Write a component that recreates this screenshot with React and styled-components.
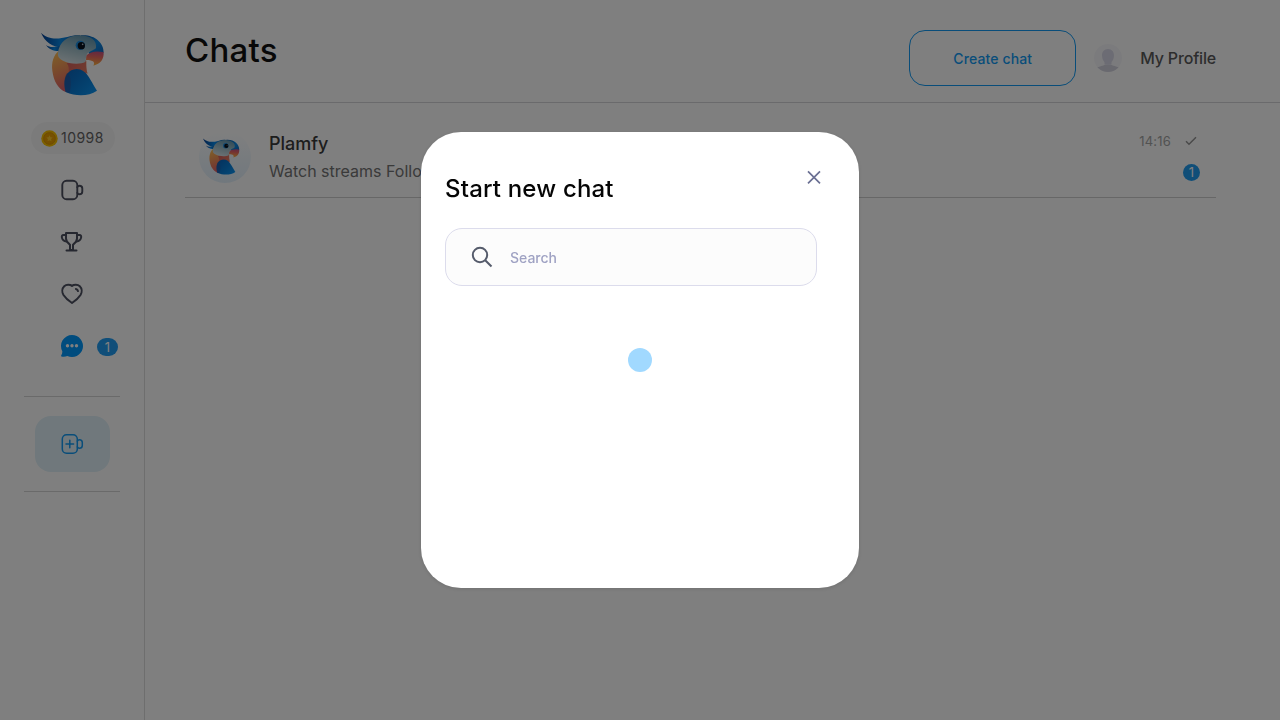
import React, { useId } from 'react';
import styled, { createGlobalStyle } from 'styled-components';

const GlobalStyle = createGlobalStyle`
  * { box-sizing: border-box; }
  body { margin: 0; background: #fff; font-family: Inter, "Liberation Sans", sans-serif; overflow: hidden; }
  button { font-family: inherit; background: none; padding: 0; border: 0; }
  svg { display: block; flex: none; }
`;

const Page = styled.div`
  display: flex;
  height: 100vh;
`;

const Sidebar = styled.aside`
  width: 145px;
  flex: none;
  border-right: 1px solid #dcdcdc;
  display: flex;
  flex-direction: column;
  align-items: center;
  padding-top: 32px;
`;

const Logo = styled.div`
  margin-left: 2px;
`;

const Coins = styled.div`
  display: flex;
  align-items: center;
  gap: 3px;
  width: 84px;
  height: 32px;
  margin: 26px 0 10px 2px;
  padding: 0 0 0 10px;
  border-radius: 16px;
  background: #f7f7f7;
  color: #646464;
  font-size: 14px;
  line-height: 18px;
  letter-spacing: 0.45px;
`;

const Nav = styled.nav`
  display: flex;
  flex-direction: column;
  width: 100%;
`;

const NavItem = styled.a`
  display: flex;
  align-items: center;
  height: 52px;
  padding-left: 60px;
  gap: 13px;
  color: #4d5060;
`;

const NavBadge = styled.span`
  width: 21px;
  height: 18px;
  margin-top: 2px;
  border-radius: 9px;
  background: #209df3;
  color: #fff;
  font-size: 13px;
  line-height: 19px;
  text-align: center;
`;

const StreamBox = styled.div`
  width: 96px;
  height: 96px;
  margin-top: 24px;
  border-top: 1px solid #d4d4d4;
  border-bottom: 1px solid #d4d4d4;
  display: flex;
  align-items: center;
  justify-content: center;
`;

const StreamButton = styled.button`
  width: 75px;
  height: 56px;
  margin-left: 1px;
  padding-right: 1px;
  border-radius: 16px;
  background: #e0f1f8;
  color: #129bf4;
  display: flex;
  align-items: center;
  justify-content: center;
`;

const Main = styled.main`
  flex: 1;
  min-width: 0;
`;

const Header = styled.header`
  height: 103px;
  padding: 30px 64px 0 40px;
  border-bottom: 1px solid #d5d5d8;
  display: flex;
  align-items: flex-start;
`;

const Title = styled.h1`
  margin: 0 auto 0 0;
  font-size: 33px;
  line-height: 41px;
  font-weight: 480;
  letter-spacing: 0.25px;
  color: #111;
`;

const CreateButton = styled.button`
  width: 167px;
  height: 56px;
  border: 1px solid #129bf4;
  border-radius: 16px;
  color: #129bf4;
  font-size: 14px;
  font-weight: 500;
  line-height: 18px;
  padding-top: 1px;
  letter-spacing: 0.12px;
`;

const Profile = styled.div`
  display: flex;
  align-items: center;
  height: 56px;
  margin-left: 18px;
  gap: 18px;
  font-size: 16px;
  font-weight: 500;
  letter-spacing: -0.18px;
  color: #5a5a5a;
`;

const ChatRow = styled.section`
  display: flex;
  height: 95px;
  margin: 0 64px 0 40px;
  padding: 28px 16px 0 14px;
  border-bottom: 1px solid #cecece;
`;

const Avatar = styled.div`
  width: 52px;
  height: 52px;
  border-radius: 50%;
  background: linear-gradient(#fff, #e2f0fb);
  display: flex;
  justify-content: center;
  padding: 7px 7px 0 0;
`;

const ChatText = styled.div`
  margin-left: 18px;
  flex: 1;
  font-size: 16px;
  line-height: 24px;
  color: #747474;
`;

const ChatName = styled.div`
  font-size: 18px;
  font-weight: 500;
  line-height: 26px;
  margin-bottom: 2px;
  color: #3a3a3a;
`;

const ChatMeta = styled.div`
  display: flex;
  flex-direction: column;
  align-items: flex-end;
  padding-top: 1px;
  font-size: 13px;
  color: #a4a4a4;
`;

const TimeLine = styled.div`
  display: flex;
  align-items: center;
  height: 18px;
  gap: 14px;
  margin-right: 3px;
  letter-spacing: 0.2px;
`;

const Unread = styled.span`
  width: 17px;
  height: 17px;
  margin-top: 14px;
  border-radius: 50%;
  background: #219df1;
  color: #fff;
  font-size: 13px;
  line-height: 17px;
  text-align: center;
`;

const Overlay = styled.div`
  position: fixed;
  inset: 0;
  background: rgba(0, 0, 0, 0.5);
  display: flex;
  align-items: center;
  justify-content: center;
`;

const Dialog = styled.div`
  width: 438px;
  height: 456px;
  padding: 36px 38px 0 24px;
  border-radius: 40px;
  background: #fff;
  box-shadow: 0 1px 4px rgba(0, 0, 0, 0.12);
`;

const DialogHead = styled.div`
  display: flex;
  justify-content: space-between;
  height: 60px;
`;

const DialogTitle = styled.h2`
  margin: 0;
  font-size: 24px;
  line-height: 42px;
  font-weight: 480;
  letter-spacing: 0.18px;
  color: #050505;
`;

const Close = styled.button`
  width: 14px;
  height: 14px;
  margin-top: 2px;
  color: #6b7093;
`;

const SearchField = styled.label`
  display: flex;
  align-items: center;
  gap: 16px;
  width: 372px;
  height: 58px;
  padding-left: 24px;
  border: 1px solid #dcdcec;
  border-radius: 17px;
  background: #fcfcfc;
  color: #555b6b;
`;

const SearchInput = styled.input`
  width: 260px;
  height: 24px;
  padding: 0;
  border: 0;
  outline: 0;
  background: transparent;
  font: 450 14px Inter, sans-serif;
  &::placeholder { color: #9fa2c3; opacity: 1; }
`;

const Loader = styled.div`
  width: 24px;
  height: 24px;
  margin: 62px 0 0 183px;
  border-radius: 50%;
  background: #a1d9ff;
`;

function Parrot({ size }) {
  const id = useId();
  const ref = (name) => `${id}${name}`;
  const fill = (name) => `url(#${id}${name})`;
  return (
    <svg width={size} height={size} viewBox="15 12 192 192">
      <defs>
        <linearGradient id={ref('crest')} x1="0" y1="0" x2="1" y2="0">
          <stop stopColor="#063f91" /><stop offset=".5" stopColor="#0789e8" /><stop offset="1" stopColor="#0654a5" />
        </linearGradient>
        <linearGradient id={ref('body')} x1=".2" y1="0" x2=".6" y2="1">
          <stop stopColor="#ffc052" /><stop offset=".4" stopColor="#f39458" /><stop offset="1" stopColor="#dd5270" />
        </linearGradient>
        <linearGradient id={ref('chest')} x1="0" y1=".3" x2="1" y2=".6">
          <stop stopColor="#d9605c" /><stop offset="1" stopColor="#e27a62" />
        </linearGradient>
        <linearGradient id={ref('head')} x1=".7" y1="0" x2=".35" y2="1">
          <stop stopColor="#5f96b1" /><stop offset=".5" stopColor="#a0bfc9" /><stop offset="1" stopColor="#d8e4e8" />
        </linearGradient>
        <linearGradient id={ref('cap')} x1="0" y1="0" x2="1" y2="1">
          <stop stopColor="#0753a6" /><stop offset=".55" stopColor="#0c8ae5" /><stop offset="1" stopColor="#1265b8" />
        </linearGradient>
        <linearGradient id={ref('beak')} x1=".6" y1="0" x2=".5" y2="1">
          <stop stopColor="#c85282" /><stop offset=".4" stopColor="#ec6b60" /><stop offset="1" stopColor="#ffb640" />
        </linearGradient>
        <linearGradient id={ref('wing')} x1="0" y1="0" x2="1" y2=".8">
          <stop stopColor="#0b60b8" /><stop offset=".55" stopColor="#087bd5" /><stop offset="1" stopColor="#0b92ef" />
        </linearGradient>
      </defs>
      <path d="M15 14C36 35 64 34 94 27C108 22 121 21 134 22L82 59C50 58 25 40 15 14Z" fill={fill('crest')} />
      <path d="M30 51C43 60 58 58 80 51L70 69C54 70 39 64 30 51Z" fill={fill('crest')} />
      <path d="M70 67C52 81 46 104 49 128C53 160 67 183 89 192L151 145V98Z" fill={fill('body')} />
      <path d="M92 106C110 101 133 101 150 98C149 112 151 125 155 137C139 127 113 122 97 138C100 126 99 113 92 106Z" fill={fill('chest')} />
      <path d="M134 22C174 18 204 43 203 74L159 79L154 51Z" fill={fill('cap')} />
      <path d="M151 82C163 71 182 68 203 73C204 94 194 108 172 113C178 103 173 96 150 96Z" fill={fill('beak')} />
      <path d="M66 75C69 42 96 22 130 22C163 22 184 37 180 60C173 68 160 68 153 79C148 87 151 94 148 102C132 110 98 108 81 98C70 92 64 86 66 75Z" fill={fill('head')} />
      <path d="M89 192C79 157 90 124 122 123C153 124 161 154 183 188C158 205 121 206 89 192Z" fill={fill('wing')} />
      <path d="M94 134C107 146 106 170 101 195L89 192C83 167 84 148 94 134Z" fill="#2f569f" opacity=".6" />
      <circle cx="133" cy="52" r="14" fill="#1d8ee0" />
      <circle cx="136" cy="53" r="11" fill="#06111c" />
      <circle cx="140" cy="49" r="2.500" fill="#b9cbd8" />
    </svg>
  );
}

function CoinIcon() {
  return (
    <svg width="17" height="17" viewBox="0 0 17 17">
      <circle cx="8.500" cy="8.500" r="8.200" fill="#f8c000" />
      <circle cx="8.500" cy="8.500" r="5.800" fill="#eda000" stroke="#dc9400" />
      <path d="m8.500 5.200 1 2 2.200.3-1.600 1.600.4 2.200-2-1-2 1 .4-2.200-1.600-1.600 2.200-.3z" fill="#ffc928" />
    </svg>
  );
}

function CameraIcon({ plus }) {
  return (
    <svg width="24" height="24" viewBox="0 0 24 24" fill="none" stroke="currentColor" strokeWidth={plus ? 1.5 : 1.9} strokeLinecap="round" strokeLinejoin="round">
      <rect x="2.300" y="2.800" width="15" height="18.400" rx="4.300" />
      <path d="M17.300 9.200c.6-1.200 1.100-1.400 2.100-1.400 1.800 0 2.900 1.200 2.900 2.800v2.800c0 1.600-1.100 2.800-2.900 2.800-1 0-1.500-.2-2.100-1.400" />
      {plus && <path d="M9.800 8.200v7.600M6 12h7.600" />}
    </svg>
  );
}

function TrophyIcon() {
  return (
    <svg width="24" height="24" viewBox="0 0 24 24" fill="none" stroke="currentColor" strokeWidth="2" strokeLinecap="round" strokeLinejoin="round">
      <path d="M6 3h11v5.500c0 3.300-2.100 4.700-4 6.200V20h-3v-5.300C8.100 13.200 6 11.800 6 8.500V3Z" />
      <path d="M6 5H3.600C2 5 1.600 6.300 1.900 7.600 2.400 10 4.400 11.200 6.600 11.600M17 5h2.400c1.600 0 2 1.300 1.700 2.600-.5 2.400-2.500 3.600-4.700 4M6.500 20.500h10" />
    </svg>
  );
}

function HeartIcon() {
  return (
    <svg width="24" height="24" viewBox="0 0 24 24" fill="none" stroke="currentColor" strokeWidth="2" strokeLinecap="round" strokeLinejoin="round">
      <path d="M12 3.900C14 2.300 17.700 2.300 19.800 4.200c2.300 2.200 2.400 6 .7 8.800-2 3.100-4.800 5.600-8.500 8-3.700-2.400-6.500-4.900-8.500-8-1.700-2.800-1.600-6.600.7-8.800C6.300 2.300 10 2.300 12 3.900Z" />
      <path d="M15.900 6.900c1.100.2 1.900 1 2.100 2.200" />
    </svg>
  );
}

function ChatIcon() {
  return (
    <svg width="24" height="24" viewBox="0 0 24 24">
      <path d="M12 1A11 11 0 1 1 7.300 21.950C5.700 22.800 3.500 23 1.500 22.500 1 22.300 1 21.700 1.300 21.300 2.200 20 2.400 18.600 2.300 17.200A11 11 0 0 1 12 1Z" fill="#0098fd" />
      <g fill="#fff"><circle cx="7.500" cy="11.800" r="1.700" /><circle cx="12" cy="11.800" r="1.700" /><circle cx="16.500" cy="11.800" r="1.700" /></g>
    </svg>
  );
}

function ProfileIcon() {
  const id = useId();
  return (
    <svg width="28" height="28" viewBox="0 0 28 28">
      <clipPath id={id}><circle cx="14" cy="14" r="14" /></clipPath>
      <g clipPath={`url(#${id})`}>
        <rect width="28" height="28" fill="#f7f7fa" />
        <path d="M3 23.500c3-1.500 6-1.200 8-3h6c2 1.800 5 1.500 8 3V28H3z" fill="#d3d3df" />
        <path d="M14 5c4 0 6.200 3 6 7-.2 3-1.400 4.700-2.500 6.200V20c-1.700 1-5.300 1-7 0v-1.800C9.400 16.700 8.200 15 8 12c-.2-4 2-7 6-7Z" fill="#d9d9e8" />
      </g>
    </svg>
  );
}

export default function App() {
  return (
    <>
      <GlobalStyle />
      <Page>
        <Sidebar>
          <Logo><Parrot size={64} /></Logo>
          <Coins><CoinIcon />10998</Coins>
          <Nav>
            <NavItem><CameraIcon /></NavItem>
            <NavItem><TrophyIcon /></NavItem>
            <NavItem><HeartIcon /></NavItem>
            <NavItem><ChatIcon /><NavBadge>1</NavBadge></NavItem>
          </Nav>
          <StreamBox><StreamButton><CameraIcon plus /></StreamButton></StreamBox>
        </Sidebar>
        <Main>
          <Header>
            <Title>Chats</Title>
            <CreateButton>Create chat</CreateButton>
            <Profile><ProfileIcon />My Profile</Profile>
          </Header>
          <ChatRow>
            <Avatar><Parrot size={37} /></Avatar>
            <ChatText><ChatName>Plamfy</ChatName>Watch streams Follo</ChatText>
            <ChatMeta>
              <TimeLine>
                14:16
                <svg width="12" height="10" viewBox="0 0 12 10" fill="none" stroke="#949494" strokeWidth="1.500"><path d="m1 5.200 3 3L11 1.200" /></svg>
              </TimeLine>
              <Unread>1</Unread>
            </ChatMeta>
          </ChatRow>
        </Main>
      </Page>
      <Overlay>
        <Dialog role="dialog">
          <DialogHead>
            <DialogTitle>Start new chat</DialogTitle>
            <Close aria-label="Close">
              <svg width="14" height="14" viewBox="0 0 14 14" fill="none" stroke="currentColor" strokeWidth="1.700"><path d="m1 1.300 12 12M13 1.300 1 13.300" /></svg>
            </Close>
          </DialogHead>
          <SearchField>
            <svg width="24" height="24" viewBox="0 0 24 24" fill="none" stroke="currentColor" strokeWidth="2"><circle cx="10" cy="10" r="7.200" /><path d="m15.200 15.200 6.300 6.300" /></svg>
            <SearchInput placeholder="Search" />
          </SearchField>
          <Loader />
        </Dialog>
      </Overlay>
    </>
  );
}
